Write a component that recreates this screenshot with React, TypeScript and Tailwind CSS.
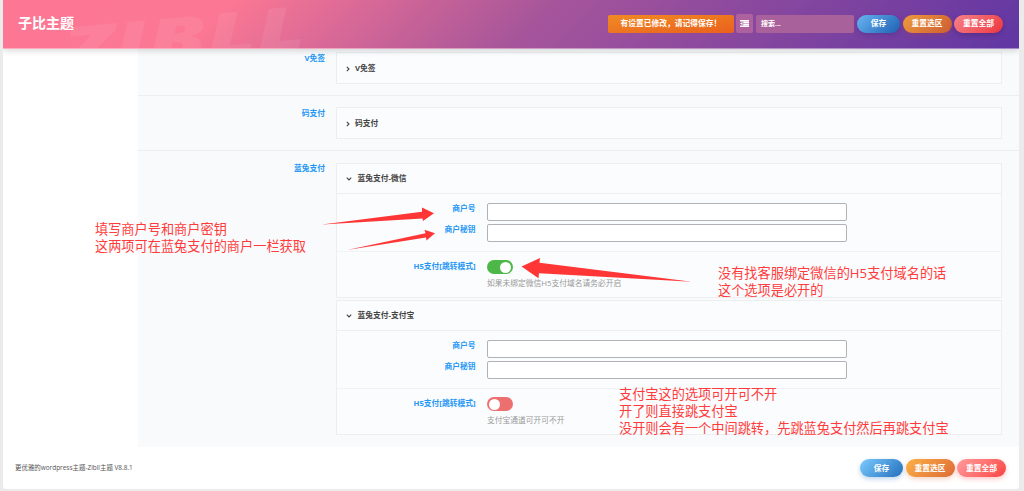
import React from 'react';

const labelText = 'text-[7.75px] leading-[12px] font-bold text-[#2497f5] text-right';

function Pill({ children, tone, wide }: { children: React.ReactNode; tone: string; wide?: boolean }) {
  return (
    <button className={`h-[18px] pt-px rounded-full text-[7.75px] font-bold text-white flex items-center justify-center ${wide ? 'w-[49px]' : 'w-[43px]'} ${tone}`}>
      {children}
    </button>
  );
}

const blueTop = 'bg-linear-135 from-[#69b4f0] to-[#1c61b3] shadow-[0_2px_5px_rgba(40,40,120,0.3)]';
const orangeTop = 'bg-linear-135 from-[#ee9b3b] to-[#cb5b34] shadow-[0_2px_5px_rgba(160,60,80,0.4)]';
const redTop = 'bg-linear-135 from-[#f5808a] to-[#ed303c] shadow-[0_2px_5px_rgba(50,20,80,0.3)]';
const blueBottom = 'bg-linear-135 from-[#7bcbff] to-[#2470bd] shadow-[0_2px_5px_rgba(36,112,189,0.3)]';
const orangeBottom = 'bg-linear-135 from-[#fcb044] to-[#dc6a38] shadow-[0_2px_5px_rgba(220,106,56,0.3)]';
const redBottom = 'bg-linear-135 from-[#ff9a9c] to-[#fb3f43] shadow-[0_2px_5px_rgba(251,63,67,0.3)]';

function Chevron({ open }: { open?: boolean }) {
  return (
    <svg viewBox="0 0 6 6" className="w-[6px] h-[6px]" fill="none" stroke="#444" strokeWidth="1.1">
      {open ? <path d="M.8 1.7L3 3.9l2.2-2.2" /> : <path d="M1.8.8L4 3 1.8 5.2" />}
    </svg>
  );
}

function Header({ children, open }: { children: React.ReactNode; open?: boolean }) {
  return (
    <div className={`flex items-center text-[7.75px] font-bold text-[#444] ${open ? 'h-[29px] pl-[9px] gap-[5.5px]' : 'h-[31px] pl-[8px] gap-[4px]'}`}>
      <Chevron open={open} />
      <span>{children}</span>
    </div>
  );
}

function Field({ label }: { label: string }) {
  return (
    <div className="flex h-[21px]">
      <div className={`-mt-px w-[138.5px] ${labelText}`}>{label}</div>
      <input className="ml-[11.5px] w-[360px] h-[18px] rounded-[2px] border border-[#b0b2b8] bg-white" />
    </div>
  );
}

function Gateway({ title, on, note }: { title: string; on?: boolean; note: string }) {
  return (
    <div className="h-[135px] border border-[#eceef0] bg-[#fbfcfe]">
      <Header open>{title}</Header>
      <div className="h-[58px] border-t border-[#eceef0] pt-[9px]">
        <Field label="商户号" />
        <Field label="商户秘钥" />
      </div>
      <div className="flex h-[45px] border-t border-[#f0f2f4] pt-[8px]">
        <div className={`w-[138.5px] ${labelText}`}>H5支付[跳转模式]</div>
        <div className="ml-[11.5px]">
          <div className={`w-[25.5px] h-[14px] rounded-full flex items-center p-[1.5px] ${on ? 'bg-[#4db748] justify-end' : 'bg-[#ed7070] justify-start'}`}>
            <div className="w-[11px] h-[11px] rounded-full bg-white" />
          </div>
          <div className="mt-[3px] text-[7.75px] leading-[12px] text-[#999] whitespace-nowrap">{note}</div>
        </div>
      </div>
    </div>
  );
}

export default function App() {
  return (
    <div className="relative w-[1024px] h-[491px] overflow-hidden bg-[#ebebeb] pl-[3px] font-['Open_Sans','Noto_Sans_CJK_SC',sans-serif]">
      <div className="w-[1016px] h-[489px] flex flex-col bg-white rounded-b-[4px] overflow-hidden">
        <header className="relative z-10 h-[49px] shrink-0 flex items-center justify-between pl-[15px] pr-[16px] pb-px border-b border-white/40 bg-[linear-gradient(135deg,#fd7794_0%,#fb7793_22%,#a6559b_52%,#6036a3_100%)] shadow-[0_2px_6px_rgba(0,0,0,0.15)]">
          <svg className="absolute left-0 top-0 w-[330px] h-[48px]" viewBox="0 0 330 48">
            <text transform="translate(63 70) rotate(-5.3) skewX(1)" textLength="242" lengthAdjust="spacingAndGlyphs" fontFamily="Open Sans" fontSize="59" fontWeight="800" fontStyle="italic" fill="#fff" fillOpacity="0.07">ZIBLL</text>
          </svg>
          <h1 className="relative text-[14px] leading-[20px] font-bold text-white -mt-[2px]">子比主题</h1>
          <div className="relative flex items-center">
            <div className="w-[126px] h-[18px] pt-px rounded-[2px] bg-linear-to-br from-[#f08a24] to-[#e9601c] text-[7.75px] font-bold text-white flex items-center justify-center">有设置已修改，请记得保存！</div>
            <div className="ml-[2px] w-[17px] h-[19px] rounded-[2px] bg-[#ad629f] flex items-center justify-center">
              <svg viewBox="0 0 9 7" className="w-[9px] h-[7px]" fill="#fff">
                <path d="M0 0h9v1.5H0zM3.2 1.8H9v1.5H3.2zM3.2 3.7H9v1.5H3.2zM0 5.5h9V7H0zM0 3.5l2.5-1.6v3.2z" />
              </svg>
            </div>
            <div className="ml-[3px] w-[98px] h-[18px] pt-px rounded-[2px] bg-[#a9619c] pl-[5px] flex items-center text-[7px] font-semibold text-white">搜索...</div>
            <div className="ml-[3px] flex gap-[2.5px]">
              <Pill tone={blueTop}>保存</Pill>
              <Pill wide tone={orangeTop}>重置选区</Pill>
              <Pill wide tone={redTop}>重置全部</Pill>
            </div>
          </div>
        </header>
        <div className="flex h-[398px] shrink-0">
          <aside className="w-[135px] shrink-0 bg-white" />
          <main className="flex-1 bg-[#f8fafc]">
            <section className="flex h-[47px] border-b border-[#eceef0] pt-[3px]">
              <div className={`w-[187px] ${labelText}`}>V免签</div>
              <div className="ml-[11px] w-[666px] h-[32px] border border-[#eceef0] bg-[#fbfcfe]"><Header>V免签</Header></div>
            </section>
            <section className="flex h-[55px] border-b border-[#eceef0] pt-[11px]">
              <div className={`w-[187px] ${labelText}`}>码支付</div>
              <div className="ml-[11px] w-[666px] h-[32px] border border-[#eceef0] bg-[#fbfcfe]"><Header>码支付</Header></div>
            </section>
            <section className="flex pt-[12px]">
              <div className={`-mt-px w-[187px] ${labelText}`}>蓝兔支付</div>
              <div className="ml-[11px] w-[666px] flex flex-col gap-[2px]">
                <Gateway title="蓝兔支付-微信" on note="如果未绑定微信H5支付域名请务必开启" />
                <Gateway title="蓝兔支付-支付宝" note="支付宝通道可开可不开" />
              </div>
            </section>
          </main>
        </div>
        <footer className="flex-1 flex items-center justify-between pl-[12px] pr-[13px] bg-white">
          <span className="text-[6.45px] text-[#555]">更优雅的wordpress主题-Zibll主题 V8.8.1</span>
          <div className="flex gap-[2.5px]">
            <Pill tone={blueBottom}>保存</Pill>
            <Pill wide tone={orangeBottom}>重置选区</Pill>
            <Pill wide tone={redBottom}>重置全部</Pill>
          </div>
        </footer>
      </div>
      <div className="absolute inset-0 z-20 pointer-events-none text-[13.2px] leading-[17.3px] text-[#ff3b3b] whitespace-nowrap">
        <svg className="absolute inset-0 w-[1024px] h-[491px]" viewBox="0 0 1024 491" fill="#ff3636">
          <path d="M322 224.6L422 211.8L422 207.5L434 213.3L423 221L422.5 218.4z" />
          <path d="M347 250L425.5 233.2L424.5 229.8L435 233.3L426.5 240.5L426 237.5z" />
          <path d="M521.5 266.5L540 258L539.5 262.8L692 281.8L539 273.2L538.5 278.2z" />
        </svg>
        <div className="absolute left-[95px] top-[221px]">填写商户号和商户密钥<br />这两项可在蓝兔支付的商户一栏获取</div>
        <div className="absolute left-[718px] top-[265px]">没有找客服绑定微信的H5支付域名的话<br />这个选项是必开的</div>
        <div className="absolute left-[619px] top-[385.5px]">支付宝这的选项可开可不开<br />开了则直接跳支付宝<br />没开则会有一个中间跳转，先跳蓝兔支付然后再跳支付宝</div>
      </div>
    </div>
  );
}
